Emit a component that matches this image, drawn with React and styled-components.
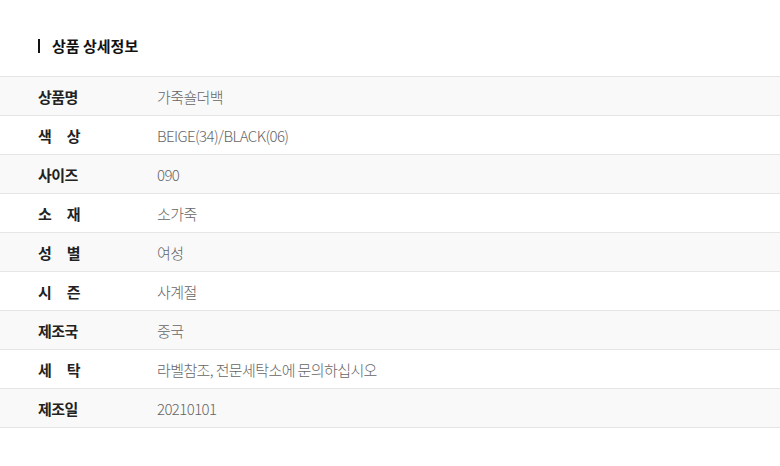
import React from 'react'
import styled, { createGlobalStyle } from 'styled-components'

const rows = [
	{ label: '상품명', value: '가죽숄더백' },
	{ label: '색 상', value: 'BEIGE(34)/BLACK(06)' },
	{ label: '사이즈', value: '090' },
	{ label: '소 재', value: '소가죽' },
	{ label: '성 별', value: '여성' },
	{ label: '시 즌', value: '사계절' },
	{ label: '제조국', value: '중국' },
	{ label: '세 탁', value: '라벨참조, 전문세탁소에 문의하십시오' },
	{ label: '제조일', value: '20210101' },
]

const App = () => {
	function renderLabel(label) {
		// spaced labels are spread over the same width as three-letter ones
		return label.split(' ').map((part, i) => <span key={ 'l' + i }>{ part }</span>)
	}

	return (
		<>
			<GlobalStyle />
			<Container>
				<Title>상품 상세정보</Title>
				<Table>
					{ rows.map((row, i) => (
						<Row key={ 'row' + i } $shaded={ i % 2 === 0 }>
							<Label>{ renderLabel(row.label) }</Label>
							<Value>{ row.value }</Value>
						</Row>
					)) }
				</Table>
			</Container>
		</>
	)
}

export default App

const GlobalStyle = createGlobalStyle`
	body {
		margin: 0;
		background: #fff;
		font-family: "Noto Sans CJK KR", "Noto Sans", sans-serif;
	}
`

const Container = styled.div`
	width: 780px;
	padding-top: 36px;
`

const Title = styled.h2`
	margin: 0 0 20px 38px;
	display: flex;
	align-items: center;
	font-size: 15px;
	font-weight: 700;
	color: #111;
	line-height: 20px;

	&::before {
		content: '';
		width: 2px;
		height: 14px;
		background: #111;
		margin-right: 12px;
	}
`

const Table = styled.div`
	border-top: 1px solid #e6e6e6;
`

const Row = styled.div`
	display: flex;
	align-items: center;
	height: 38px;
	border-bottom: 1px solid #e6e6e6;
	background: ${ props => props.$shaded ? '#f9f9f9' : '#fff' };
`

const Label = styled.div`
	flex: none;
	display: flex;
	justify-content: space-between;
	width: 42px;
	margin: 0 77px 0 38px;
	font-size: 15px;
	font-weight: 700;
	color: #222;
	white-space: nowrap;
	letter-spacing: -0.5px;
`

const Value = styled.div`
	flex: 1;
	font-size: 15px;
	font-weight: 300;
	color: #666;
	letter-spacing: -0.6px;
`
